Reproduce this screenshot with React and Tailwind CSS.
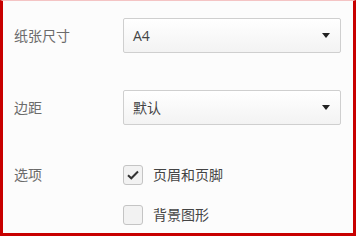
import React, { useState } from 'react';

function Select({ value }) {
  return (
    <div className="flex h-[35px] w-[218px] items-center justify-between rounded-[2px] border border-[#cfcfcf] bg-gradient-to-b from-[#ffffff] to-[#f3f3f3] pl-[9px] pr-[10px] text-[#444]">
      <span>{value}</span>
      <svg width="8" height="5" viewBox="0 0 8 5">
        <path d="M0 0H8L4 5Z" fill="#222" />
      </svg>
    </div>
  );
}

function Check({ checked, label, onToggle }) {
  return (
    <div className="flex h-[20px] items-center cursor-pointer" onClick={onToggle}>
      <div className="flex h-[20px] w-[20px] items-center justify-center rounded-[3px] border border-[#c4c4c4] bg-[#f2f2f2]">
        {checked && (
          <svg width="12" height="10" viewBox="0 0 12 10">
            <path d="M1 5.2L4.3 8.3L11 1.5" fill="none" stroke="#333" strokeWidth="2" />
          </svg>
        )}
      </div>
      <span className="ml-[10px] text-[#444]">{label}</span>
    </div>
  );
}

export default function App() {
  const [opts, setOpts] = useState({ header: true, bg: false });

  return (
    <div className="h-[236px] w-[358px] bg-white">
      <div
        className="h-[236px] w-[356px] border-b-[3px] border-l-[3px] border-r-[3px] border-t border-[#c80000] border-t-[#f4c4c4] bg-[#fcfcfc] pl-[11px] pt-[17px] text-[14px] leading-none"
        style={{ fontFamily: '"Open Sans", "Noto Sans CJK SC", sans-serif' }}
      >
        <div className="flex h-[35px] items-center">
          <div className="w-[109px] text-[#6b6b6b]">纸张尺寸</div>
          <Select value="A4" />
        </div>

        <div className="mt-[37px] flex h-[35px] items-center">
          <div className="w-[109px] text-[#6b6b6b]">边距</div>
          <Select value="默认" />
        </div>

        <div className="mt-[40px] flex">
          <div className="flex h-[20px] w-[109px] items-center text-[#6b6b6b]">选项</div>
          <div className="flex flex-col gap-[20px]">
            <Check
              checked={opts.header}
              label="页眉和页脚"
              onToggle={() => setOpts({ ...opts, header: !opts.header })}
            />
            <Check
              checked={opts.bg}
              label="背景图形"
              onToggle={() => setOpts({ ...opts, bg: !opts.bg })}
            />
          </div>
        </div>
      </div>
    </div>
  );
}
